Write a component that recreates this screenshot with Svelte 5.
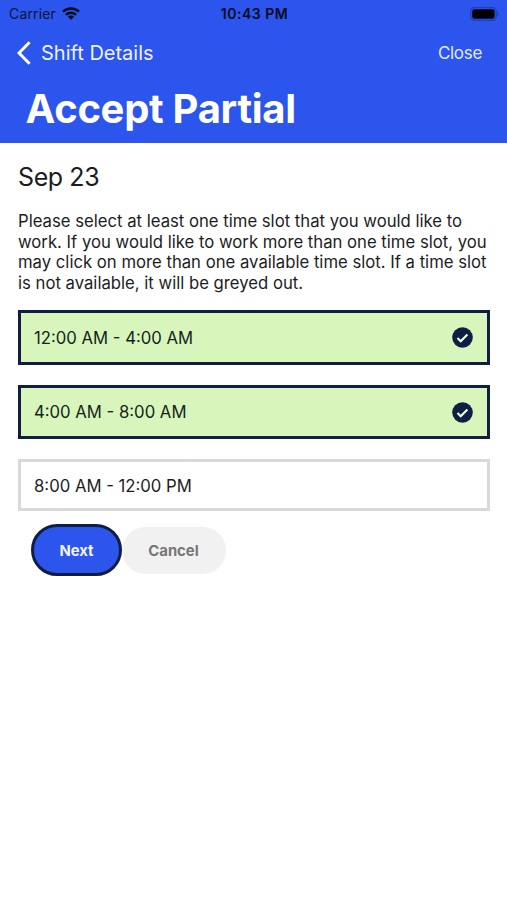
<script lang="ts">
	interface Slot {
		label: string;
		selected: boolean;
	}

	let slots = $state<Slot[]>([
		{ label: '12:00 AM - 4:00 AM', selected: true },
		{ label: '4:00 AM - 8:00 AM', selected: true },
		{ label: '8:00 AM - 12:00 PM', selected: false }
	]);
</script>

<div class="screen">
	<header>
		<div class="status">
			<div class="carrier">
				<span>Carrier</span>
				<svg width="18" height="13" viewBox="0 0 18 13" aria-hidden="true">
					<g fill="none" stroke="#060c20" stroke-width="2.5">
						<path d="M1 4.7a11.4 11.4 0 0 1 16 0" />
						<path d="M4 7.9a7.1 7.1 0 0 1 10 0" />
					</g>
					<path d="M9 12.8 5.9 9.8a4.4 4.4 0 0 1 6.2 0z" fill="#060c20" />
				</svg>
			</div>
			<span class="time">10:43 PM</span>
			<svg class="battery" width="30" height="14" viewBox="0 0 30 14" aria-hidden="true">
				<rect x=".7" y=".7" width="25.6" height="12.6" rx="3.8" fill="none" stroke="#1e3fb4" stroke-width="1.3" />
				<rect x="2.2" y="2.3" width="22.4" height="9.4" rx="2.2" fill="#000208" />
				<path d="M27.6 4.8c1.7.6 1.7 3.8 0 4.4z" fill="#1e3fb4" />
			</svg>
		</div>
		<nav>
			<button class="back">
				<svg width="14" height="24" viewBox="0 0 14 24" aria-hidden="true">
					<path d="M12.6 1.3 2 12l10.6 10.7" fill="none" stroke="#fff" stroke-width="3" />
				</svg>
				<span>Shift Details</span>
			</button>
			<button class="close">Close</button>
		</nav>
		<h1>Accept Partial</h1>
	</header>

	<main>
		<h2>Sep 23</h2>
		<p>
			Please select at least one time slot that you would like to<br />
			work. If you would like to work more than one time slot, you<br />
			may click on more than one available time slot. If a time slot<br />
			is not available, it will be greyed out.
		</p>
		<div class="slots">
			{#each slots as slot (slot.label)}
				<button class="slot" class:selected={slot.selected} onclick={() => (slot.selected = !slot.selected)}>
					<span>{slot.label}</span>
					{#if slot.selected}
						<svg width="21" height="21" viewBox="0 0 21 21" aria-hidden="true">
							<circle cx="10.5" cy="10.5" r="10.3" fill="#111e44" />
							<path d="m5.5 11.1 3.2 3.1 6.7-6.8" fill="none" stroke="#f1ffe8" stroke-width="2.1" />
						</svg>
					{/if}
				</button>
			{/each}
		</div>
		<div class="actions">
			<button class="next">Next</button>
			<button class="cancel">Cancel</button>
		</div>
	</main>
</div>

<style>
	:global(body) {
		margin: 0;
		background: #fff;
	}
	.screen {
		min-height: 900px;
		font-family: Inter, 'Liberation Sans', sans-serif;
		color: #1c1c1e;
		white-space: nowrap;
	}
	button {
		margin: 0;
		padding: 0;
		border: 0;
		background: none;
		font: inherit;
		color: inherit;
	}
	svg {
		display: block;
		flex: none;
	}
	header {
		box-sizing: border-box;
		height: 142.5px;
		background: #2b55ec;
		color: #fff;
	}
	.status {
		display: grid;
		grid-template-columns: 1fr auto 1fr;
		align-items: center;
		height: 27px;
		padding: 0 7px 0 9px;
		color: #0a1536;
		font-size: 14px;
	}
	.carrier {
		display: flex;
		align-items: center;
		gap: 6px;
		letter-spacing: 0.15px;
	}
	.time {
		font-weight: 600;
		letter-spacing: 0.5px;
		color: #060c20;
	}
	.battery {
		justify-self: end;
	}
	nav {
		display: flex;
		align-items: center;
		justify-content: space-between;
		height: 51px;
		padding: 0 25px 0 17px;
	}
	.back {
		display: flex;
		align-items: center;
		gap: 10px;
		font-size: 20px;
		color: #eef2ff;
	}
	.close {
		font-size: 17px;
		letter-spacing: -0.3px;
		color: #e3eaff;
	}
	h1 {
		margin: 6px 0 0 25.5px;
		font-size: 40px;
		line-height: 50px;
		font-weight: 700;
		letter-spacing: -0.3px;
	}
	main {
		padding: 19.5px 17px 0 18px;
	}
	h2 {
		margin: 0;
		font-size: 25px;
		line-height: 31px;
		font-weight: 400;
		letter-spacing: -0.4px;
	}
	p {
		margin: 18px 0 0;
		font-size: 16.7px;
		line-height: 20.5px;
	}
	.slots {
		display: grid;
		gap: 20px;
		margin-top: 17px;
	}
	.slot {
		box-sizing: border-box;
		display: flex;
		align-items: center;
		justify-content: space-between;
		height: 52px;
		padding: 1px 14px 0 13px;
		border: 3px solid #d9d9d9;
		font-size: 16.7px;
	}
	.slot.selected {
		height: 54.5px;
		border-color: #111e44;
		background: #d8f6bc;
		color: #14231a;
	}
	.actions {
		display: flex;
		align-items: center;
		margin: 13px 0 0 13px;
		font-size: 14.8px;
		font-weight: 700;
	}
	.next {
		box-sizing: border-box;
		width: 91px;
		height: 52px;
		padding-top: 1px;
		border: 3px solid #111e44;
		border-radius: 26px;
		background: #2b55ec;
		color: #f2f5ff;
	}
	.cancel {
		box-sizing: border-box;
		width: 104px;
		height: 47px;
		padding: 1px 1px 0 0;
		border-radius: 24px;
		background: #f1f1f1;
		color: #777;
	}
</style>
